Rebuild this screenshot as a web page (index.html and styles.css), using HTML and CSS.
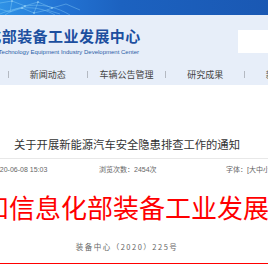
FILE: index.html
```html
<!DOCTYPE html>
<html>
  <head>
    <meta charset="utf-8">
    <link rel="stylesheet" href="styles.css">
  </head>

  <body>
    <div class="header">
      <div class="banner">
        <svg class="net" width="90" height="15" viewBox="0 0 90 15">
          <g fill="none" stroke="#9fe0ff" stroke-width="0.5" opacity="0.7">
            <path d="M0 3 L12 1 L25 6 L38 2 L52 8 L66 4 L80 10" />
            <path d="M0 9 L10 12 L22 8 L34 13 L47 10 L60 14" />
            <path d="M12 1 L10 12 M25 6 L22 8 M38 2 L34 13 M52 8 L47 10" />
            <path d="M5 15 C20 4 45 0 70 15" />
            <path d="M0 14 C18 6 38 5 55 15" />
          </g>
          <g fill="#c8f0ff" opacity="0.8">
            <circle cx="12" cy="1" r="0.8" />
            <circle cx="25" cy="6" r="0.8" />
            <circle cx="38" cy="2" r="0.8" />
            <circle cx="52" cy="8" r="0.8" />
            <circle cx="22" cy="8" r="0.8" />
            <circle cx="34" cy="13" r="0.8" />
          </g>
        </svg>
      </div>

      <div class="brand">
        <div class="logo">
          <div class="logo-cn">工业和信息化部装备工业发展中心</div>
          <div class="logo-en">Ministry of Industry and Information Technology Equipment Industry Development Center</div>
        </div>
        <div class="search"></div>
      </div>

      <div class="nav">
        <a class="nav-item">新闻动态</a>
        <a class="nav-item">车辆公告管理</a>
        <a class="nav-item">研究成果</a>
        <a class="nav-item">新能源车</a>
      </div>
    </div>

    <div class="article">
      <h1 class="title">关于开展新能源汽车安全隐患排查工作的通知</h1>

      <div class="meta">
        <span class="meta-date">2020-06-08 15:03</span>
        <span class="meta-views">浏览次数：2454次</span>
        <span class="meta-font">字体：[大中小]</span>
      </div>

      <div class="red-head">
        <span>工业和信息化部装备工业发展中心</span>
      </div>

      <div class="doc-no">装备中心（2020）225号</div>
    </div>
  </body>
</html>
```

FILE: styles.css
```css
html,
body {
  overflow: hidden;
}

body {
  margin: 0;
  font-family: "Liberation Sans", "Noto Sans CJK SC", sans-serif;
  background-color: #fff;
  color: #333;
}

/* header */

.header {
  background-color: #e7eef9;
  height: 85px;
}

.banner {
  height: 15px;
  background: linear-gradient(90deg, #2f92e6 0%, #2374d4 22%, #1c62c0 45%, #1a58b3 100%);
}

.net {
  display: block;
}

.brand {
  display: flex;
  height: 49px;
}

.logo {
  flex: none;
  margin-left: -91px;
  width: 232px;
  padding-top: 12px;
  color: #1c4f9f;
}

.logo-cn {
  font-family: "Noto Sans CJK SC", sans-serif;
  font-weight: bold;
  font-size: 15px;
  line-height: 18px;
  letter-spacing: 0.45px;
  white-space: nowrap;
}

.logo-en {
  margin-top: 3px;
  font-size: 6px;
  line-height: 8px;
  white-space: nowrap;
  direction: rtl;
  text-align: left;
  padding-right: 2px;
  overflow: hidden;
  color: #2a5ca6;
}

.search {
  margin-left: auto;
  margin-top: 15px;
  width: 30px;
  height: 23px;
  background-color: #fff;
}

.nav {
  display: flex;
  align-items: center;
  height: 21px;
  padding-left: 8px;
  white-space: nowrap;
}

.nav-item {
  flex: none;
  width: 77.67px;
  height: 7px;
  line-height: 7px;
  border-left: 1px solid #b4b9c2;
  text-align: center;
  font-family: "Noto Sans CJK SC", sans-serif;
  font-size: 9px;
  color: #444;
}

/* article */

.article {
  padding-top: 50px;
}

.title {
  margin: 0;
  padding: 0 14px 5px 0;
  border-bottom: 1px solid #e8e8e8;
  font-family: "Noto Sans CJK SC", sans-serif;
  font-weight: normal;
  font-size: 11.3px;
  line-height: 18px;
  text-align: center;
  color: #333;
}

.meta {
  display: flex;
  margin-top: 6px;
  font-size: 7px;
  line-height: 10px;
  color: #666;
  white-space: nowrap;
}

.meta-date {
  flex: none;
  width: 107px;
  margin-left: -8px;
}

.meta-views {
  flex: none;
  width: 127px;
}

.red-head {
  display: flex;
  justify-content: center;
  margin-top: 17px;
  padding-right: 16px;
  font-family: "Noto Sans CJK SC", sans-serif;
  font-size: 26px;
  line-height: 30px;
  color: #ff0000;
  white-space: nowrap;
}

.red-head span {
  flex: none;
}

.doc-no {
  margin-top: 20px;
  padding: 0 14px 11px 0;
  border-bottom: 1px solid #ff0000;
  font-family: "Noto Sans CJK SC", sans-serif;
  font-size: 7.5px;
  line-height: 10px;
  letter-spacing: 1.5px;
  text-align: center;
  color: #666;
}
```
